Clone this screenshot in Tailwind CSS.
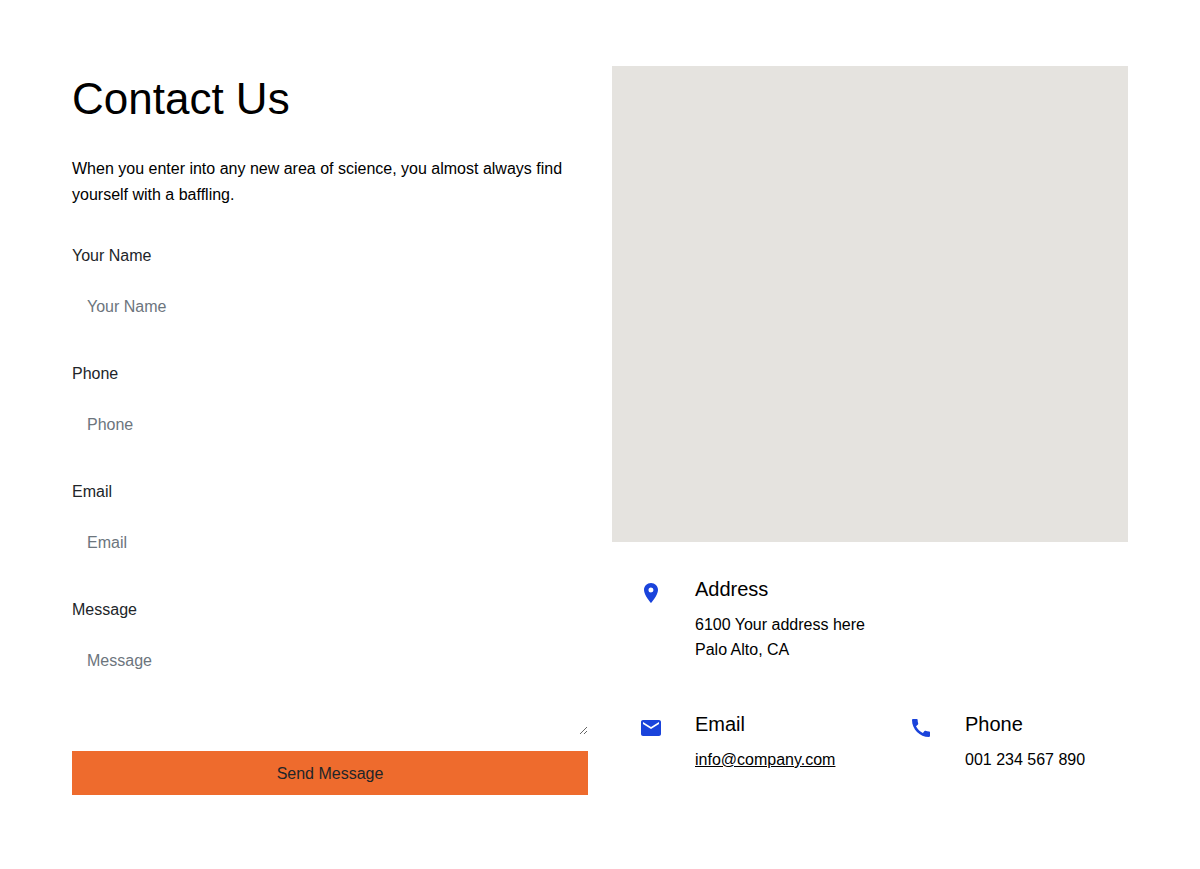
<!DOCTYPE html>
<html lang="en">
<head>
<meta charset="utf-8">
<title>Contact Us</title>
<script src="https://cdn.jsdelivr.net/npm/@tailwindcss/browser@4"></script>
</head>
<body class="bg-white text-black font-['Liberation_Sans',Arial,sans-serif] text-base">
<main class="flex gap-6 px-[72px] pt-[66px]">
  <section class="w-[516px]">
    <h1 class="text-[44px] leading-[66px]">Contact Us</h1>
    <p class="mt-6 leading-[25.6px]">When you enter into any new area of science, you almost always find yourself with a baffling.</p>
    <form class="mt-[36.8px] text-[#212529]">
      <label for="name" class="block h-6 leading-6">Your Name</label>
      <input id="name" type="text" placeholder="Your Name" class="mt-[14px] mb-[30px] block h-[50px] w-full px-[15px] outline-none placeholder:text-[#6c757d]">
      <label for="phone" class="block h-6 leading-6">Phone</label>
      <input id="phone" type="tel" placeholder="Phone" class="mt-[14px] mb-[30px] block h-[50px] w-full px-[15px] outline-none placeholder:text-[#6c757d]">
      <label for="email" class="block h-6 leading-6">Email</label>
      <input id="email" type="email" placeholder="Email" class="mt-[14px] mb-[30px] block h-[50px] w-full px-[15px] outline-none placeholder:text-[#6c757d]">
      <label for="message" class="block h-6 leading-6">Message</label>
      <textarea id="message" placeholder="Message" class="mt-[14px] block h-[99px] w-full resize-y px-[15px] py-[13px] leading-6 outline-none placeholder:text-[#6c757d]"></textarea>
      <button type="button" class="mt-4 block h-11 w-full bg-[#ee6b2d] pt-0.5 text-center leading-6">Send Message</button>
    </form>
  </section>
  <section class="w-[516px]">
    <div class="h-[476px] bg-[#e5e3df]"></div>
    <div class="mt-8 grid grid-cols-[270px_246px] gap-y-[47px] pl-[27px]">
      <div class="col-span-2 flex gap-8">
        <svg class="mt-[7px] size-6" viewBox="0 0 24 24" fill="#1a43db"><path d="M12 2C8.13 2 5 5.13 5 9c0 5.25 7 13 7 13s7-7.75 7-13c0-3.87-3.13-7-7-7zm0 9.500a2.500 2.500 0 1 1 0-5 2.500 2.500 0 0 1 0 5z"/></svg>
        <div>
          <h2 class="text-xl leading-[30px]">Address</h2>
          <p class="mt-2 leading-[25px]">6100 Your address here<br>Palo Alto, CA</p>
        </div>
      </div>
      <div class="flex gap-8">
        <svg class="mt-[7px] size-6" viewBox="0 0 24 24" fill="#1a43db"><path d="M20 4H4c-1.100 0-1.990.9-1.990 2L2 18c0 1.100.9 2 2 2h16c1.100 0 2-.9 2-2V6c0-1.100-.9-2-2-2zm0 4l-8 5-8-5V6l8 5 8-5v2z"/></svg>
        <div>
          <h2 class="text-xl leading-[30px]">Email</h2>
          <p class="mt-2 leading-[25.6px]"><a href="#" class="underline">info@company.com</a></p>
        </div>
      </div>
      <div class="flex gap-8">
        <svg class="mt-[7px] size-6" viewBox="0 0 24 24" fill="#1a43db"><path d="M20.010 15.380c-1.230 0-2.420-.2-3.530-.56a.977.977 0 0 0-1.010.24l-1.570 1.970c-2.830-1.350-5.480-3.900-6.890-6.830l1.950-1.660c.27-.28.35-.67.24-1.020-.37-1.110-.56-2.300-.56-3.530 0-.54-.45-.99-.99-.99H4.190C3.650 3 3 3.240 3 3.990 3 13.280 10.730 21 20.010 21c.71 0 .99-.63.99-1.180v-3.450c0-.54-.45-.99-.99-.99z"/></svg>
        <div>
          <h2 class="text-xl leading-[30px]">Phone</h2>
          <p class="mt-2 leading-[25.6px]">001 234 567 890</p>
        </div>
      </div>
    </div>
  </section>
</main>
</body>
</html>
